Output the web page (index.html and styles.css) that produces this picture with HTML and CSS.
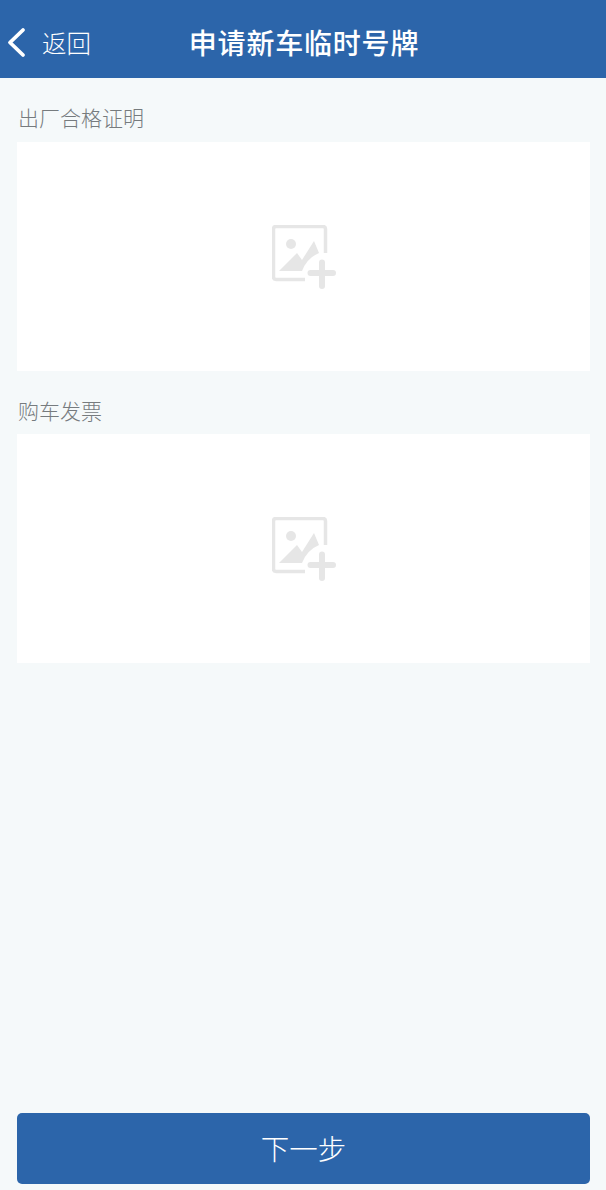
FILE: index.html
```html
<!DOCTYPE html>
<html lang="zh-CN">
<head>
    <meta charset="UTF-8">
    <meta name="viewport" content="width=device-width, initial-scale=1.0">
    <title>申请新车临时号牌</title>
    <link rel="stylesheet" href="styles.css">
</head>
<body>

<header class="navbar">
    <div class="back">
        <svg class="back-icon" width="20" height="32" viewBox="0 0 20 32">
            <path d="M17 3 L4 15.500 L17 28" fill="none" stroke="#fff" stroke-width="3.8" stroke-linecap="round" stroke-linejoin="round"/>
        </svg>
        <span class="back-text">返回</span>
    </div>
    <h1 class="title">申请新车临时号牌</h1>
</header>

<main class="content">
    <section class="upload">
        <h2 class="upload-label">出厂合格证明</h2>
        <div class="upload-box">
            <svg class="upload-icon" width="64" height="64" viewBox="0 0 64 64">
                <path d="M33 54.500 H4 Q1.500 54.500 1.500 52 V4 Q1.500 1.500 4 1.500 H51 Q53.500 1.500 53.500 4 V28" fill="none" stroke="#e6e6e6" stroke-width="3.500"/>
                <circle cx="19" cy="19" r="5" fill="#e6e6e6"/>
                <path d="M7 46 L25 28 L30 35 L42 16 L47 28 Q35 33 30 46 Z" fill="#e6e6e6"/>
                <path d="M38.500 48 H61 M50 37.500 V61" fill="none" stroke="#e6e6e6" stroke-width="6" stroke-linecap="round"/>
            </svg>
        </div>
    </section>

    <section class="upload">
        <h2 class="upload-label">购车发票</h2>
        <div class="upload-box">
            <svg class="upload-icon" width="64" height="64" viewBox="0 0 64 64">
                <path d="M33 54.500 H4 Q1.500 54.500 1.500 52 V4 Q1.500 1.500 4 1.500 H51 Q53.500 1.500 53.500 4 V28" fill="none" stroke="#e6e6e6" stroke-width="3.500"/>
                <circle cx="19" cy="19" r="5" fill="#e6e6e6"/>
                <path d="M7 46 L25 28 L30 35 L42 16 L47 28 Q35 33 30 46 Z" fill="#e6e6e6"/>
                <path d="M38.500 48 H61 M50 37.500 V61" fill="none" stroke="#e6e6e6" stroke-width="6" stroke-linecap="round"/>
            </svg>
        </div>
    </section>
</main>

<footer class="footer">
    <button type="button" class="next-btn">下一步</button>
</footer>

</body>
</html>
```

FILE: styles.css
```css
* {
    box-sizing: border-box;
}

html, body {
    height: 100%;
}

body {
    margin: 0;
    display: flex;
    flex-direction: column;
    background-color: #f5f9fa;
    font-family: "Noto Sans CJK SC", "Liberation Sans", sans-serif;
}

.navbar {
    position: relative;
    display: flex;
    align-items: center;
    justify-content: center;
    height: 78px;
    padding-top: 6px;
    padding-left: 2px;
    background-color: #2c65aa;
    color: #fff;
}

.back {
    position: absolute;
    left: 6px;
    top: 27px;
    display: flex;
    align-items: center;
    gap: 16px;
}

.back-text {
    font-size: 24.500px;
    line-height: 32px;
    font-weight: 300;
}

.title {
    margin: 0;
    font-size: 28px;
    font-weight: 500;
    line-height: 40px;
    letter-spacing: 0.8px;
}

.content {
    flex: 1;
    padding: 0 16px 0 17px;
}

.upload-label {
    margin: 0;
    padding: 25px 0 8px 1px;
    height: 64px;
    font-size: 21px;
    font-weight: 300;
    line-height: 28px;
    color: #767b7e;
}

.upload + .upload .upload-label {
    padding-left: 1px;
    height: 63px;
}

.upload-box {
    display: flex;
    align-items: center;
    justify-content: center;
    height: 229px;
    background-color: #fff;
}

.upload-icon {
    margin-top: 1px;
}

.footer {
    padding: 0 16px 6px 17px;
}

.next-btn {
    display: block;
    width: 100%;
    height: 71px;
    padding-bottom: 4px;
    border: 0;
    border-radius: 5px;
    background-color: #2c65aa;
    color: #fff;
    font-family: inherit;
    font-size: 28.500px;
    font-weight: 300;
}
```
